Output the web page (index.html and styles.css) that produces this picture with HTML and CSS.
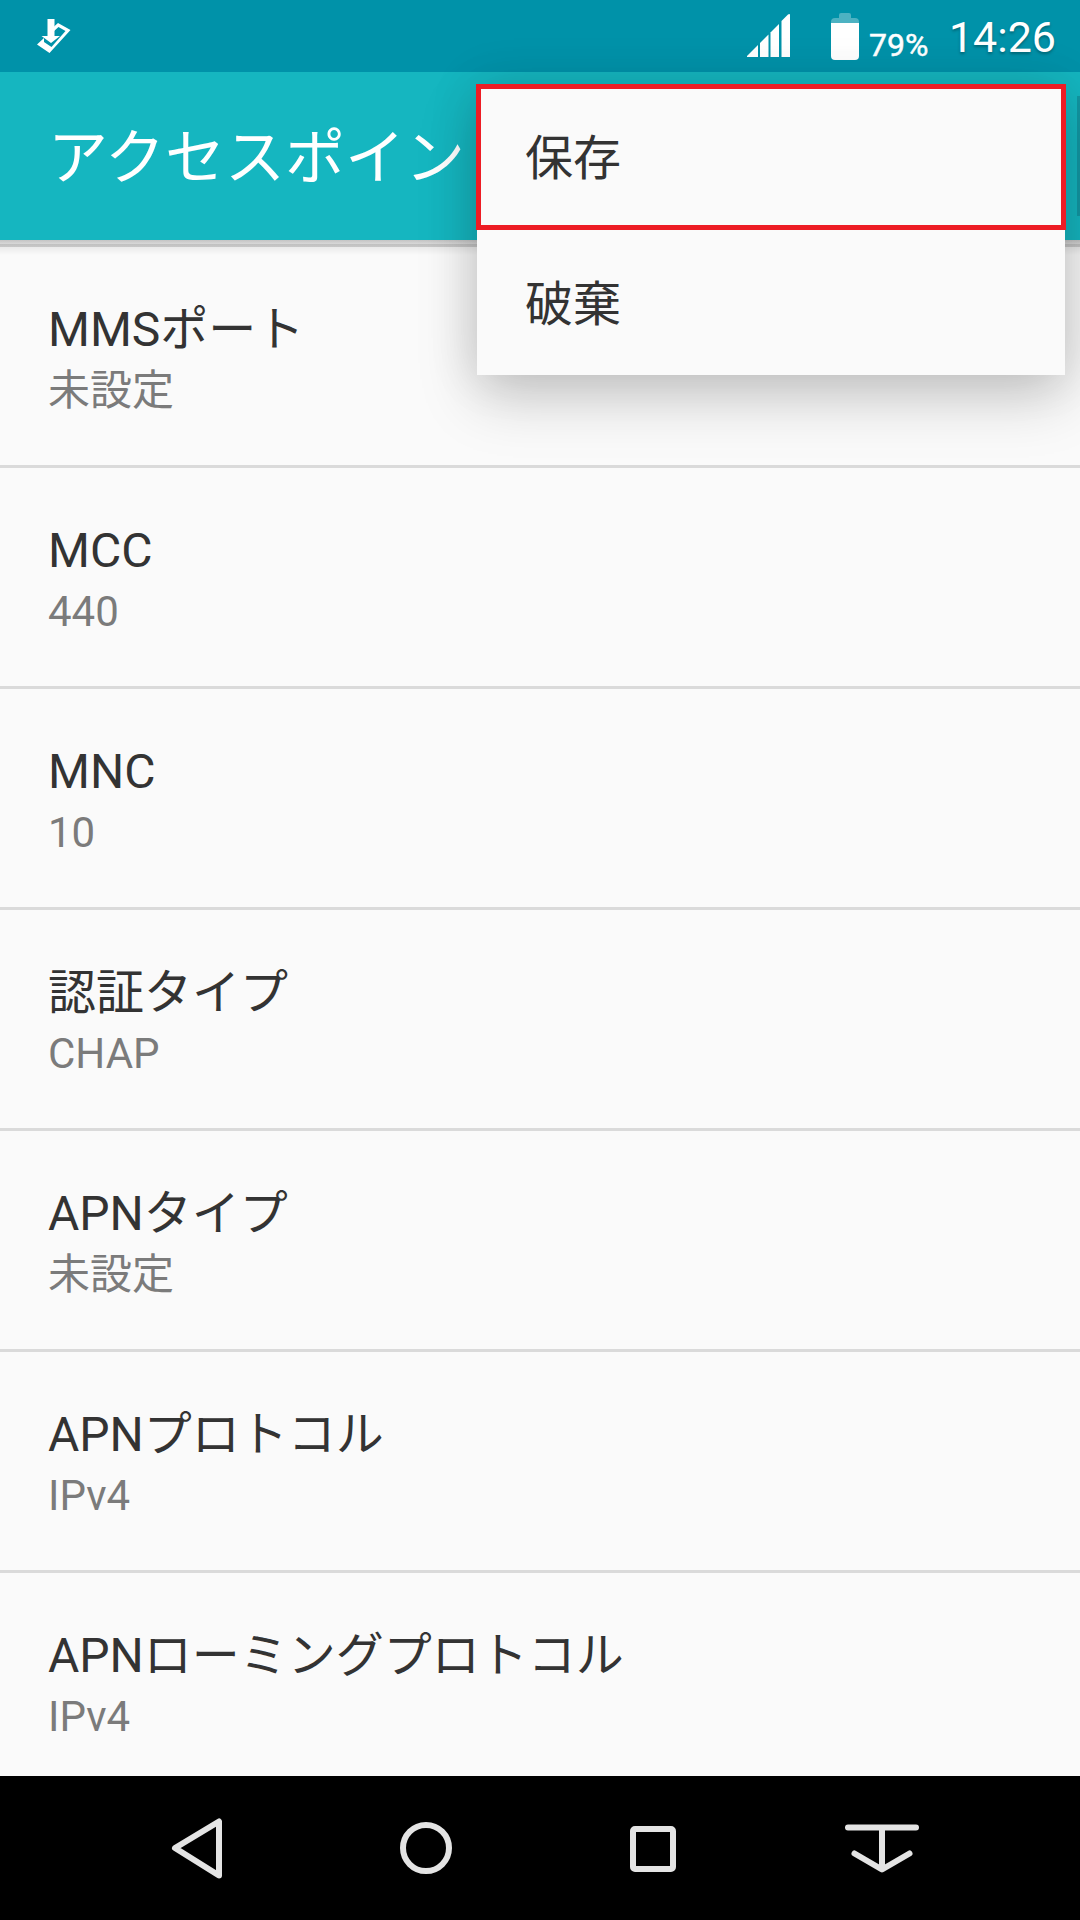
FILE: index.html
```
<!DOCTYPE html>
<html lang="ja">
<head>
    <meta charset="UTF-8">
    <meta name="viewport" content="width=device-width, initial-scale=1.0">
    <title>アクセスポイント</title>
    <link rel="stylesheet" href="styles.css">
</head>
<body>

    <div class="status-bar">
        <svg class="download-icon" width="36" height="36" viewBox="0 0 36 36">
            <path d="M8 20L1 26.500L13.500 35L34.500 12L22 5L17 9.500V14L22.500 9L29.500 13L15.500 29L8 24Z" fill="#fff"/>
            <path d="M11.500 1h7v17h5.500l-9 7-9.500-7h6z" fill="#fff"/>
        </svg>
        <div class="status-right">
            <svg class="signal-icon" width="43" height="43" viewBox="0 0 43 43" fill="#fff">
                <path d="M0 43V42L11 31V43Z"/>
                <path d="M13 43V29L21.500 20.500V43Z"/>
                <path d="M23.500 43V18.500L32 10V43Z"/>
                <path d="M34.500 43V7L41 0.500Q43 -0.500 43 1V43Z"/>
            </svg>
            <svg class="battery-icon" width="28" height="47" viewBox="0 0 28 47">
                <path d="M8 5V2Q8 0 10 0H18Q20 0 20 2V5H24Q28 5 28 9V10H0V9Q0 5 4 5Z" fill="#4db2c2"/>
                <path d="M0 10H28V43Q28 47 24 47H4Q0 47 0 43Z" fill="#fff"/>
            </svg>
            <span class="battery-text">79%</span>
            <span class="clock">14:26</span>
        </div>
    </div>

    <header>
        <h1>アクセスポイン</h1>
        <div class="header-edge"></div>
    </header>

    <main>
        <div class="item">
            <div class="title">MMSポート</div>
            <div class="summary">未設定</div>
        </div>
        <div class="item">
            <div class="title">MCC</div>
            <div class="summary">440</div>
        </div>
        <div class="item">
            <div class="title">MNC</div>
            <div class="summary">10</div>
        </div>
        <div class="item">
            <div class="title">認証タイプ</div>
            <div class="summary">CHAP</div>
        </div>
        <div class="item">
            <div class="title">APNタイプ</div>
            <div class="summary">未設定</div>
        </div>
        <div class="item">
            <div class="title">APNプロトコル</div>
            <div class="summary">IPv4</div>
        </div>
        <div class="item">
            <div class="title">APNローミングプロトコル</div>
            <div class="summary">IPv4</div>
        </div>
    </main>

    <!-- Overflow menu -->
    <div class="menu">
        <div class="menu-item selected">保存</div>
        <div class="menu-item">破棄</div>
    </div>

    <nav class="nav-bar">
        <svg width="229" height="144" viewBox="0 0 229 144">
            <path d="M137 45.500V99.500L93 72Z"/>
        </svg>
        <svg width="229" height="144" viewBox="0 0 229 144">
            <circle cx="115" cy="72" r="23"/>
        </svg>
        <svg width="229" height="144" viewBox="0 0 229 144">
            <rect x="93" y="53" width="40" height="40" rx="2"/>
        </svg>
        <svg width="229" height="144" viewBox="0 0 229 144">
            <path d="M79 51.500H147M113 51.500V92M85.500 77.500L113 93.500L140.500 77.500"/>
        </svg>
    </nav>

</body>
</html>
```
FILE: styles.css
```
* {
    margin: 0;
    padding: 0;
    box-sizing: border-box;
}

body {
    width: 1080px;
    height: 1920px;
    overflow: hidden;
    position: relative;
    display: flex;
    flex-direction: column;
    font-family: Roboto, "Noto Sans CJK JP", sans-serif;
    background-color: #fafafa;
    color: #333;
}

.status-bar {
    height: 72px;
    background: #0092a9;
    color: white;
    display: flex;
    justify-content: space-between;
    padding: 0 24px 0 36px;
}

.download-icon {
    margin-top: 18px;
}

.status-right {
    display: flex;
    align-items: flex-start;
}

.signal-icon {
    margin-top: 14px;
    margin-right: 41px;
}

.battery-icon {
    margin-top: 13px;
    margin-right: 10px;
}

.battery-text {
    width: 60px;
    font-size: 32px;
    line-height: 40px;
    margin-top: 25px;
    margin-right: 20px;
    -webkit-text-stroke: 0.5px white;
}

.clock {
    font-size: 43px;
    line-height: 50px;
    margin-top: 12px;
    text-shadow: 0 2px 3px rgba(0, 0, 0, 0.3);
}

header {
    height: 168px;
    background: #15b6c0;
    color: white;
    display: flex;
    justify-content: space-between;
    align-items: center;
    padding-left: 48px;
}

header h1 {
    font-size: 60px;
    font-weight: 400;
    line-height: 80px;
    padding-top: 6px;
}

.header-edge {
    width: 3px;
    height: 120px;
    background: #1298a4;
}

main {
    flex: 1;
    overflow: hidden;
    padding-top: 7px;
    background: linear-gradient(#c4c4c4, #d8d8d8 4px, #c0c0c0 4px, #c8c8c8 7px, #eaeaea 7px, #fafafa 15px);
}

.item {
    height: 221px;
    padding: 53px 48px 0;
    border-bottom: 3px solid #dadada;
}

.item .title {
    font-size: 48px;
    line-height: 60px;
}

.item .summary {
    font-size: 42px;
    line-height: 62px;
    color: #7b7b7b;
}

.menu {
    position: absolute;
    top: 84px;
    left: 477px;
    width: 588px;
    height: 291px;
    background: #fafafa;
    box-shadow: 0 24px 56px rgba(0, 0, 0, 0.18), 0 0 48px rgba(0, 0, 0, 0.12);
}

.menu-item {
    height: 145px;
    padding-left: 48px;
    font-size: 48px;
    line-height: 149px;
}

.menu-item.selected {
    width: 590px;
    height: 146px;
    margin-left: -1px;
    padding-left: 44px;
    border: 5px solid #ed1c24;
    line-height: 139px;
}

.nav-bar {
    height: 144px;
    background: black;
    display: flex;
    justify-content: center;
}

.nav-bar svg {
    fill: none;
    stroke: #e4e4e4;
    stroke-width: 6;
    stroke-linecap: round;
    stroke-linejoin: round;
}
```
